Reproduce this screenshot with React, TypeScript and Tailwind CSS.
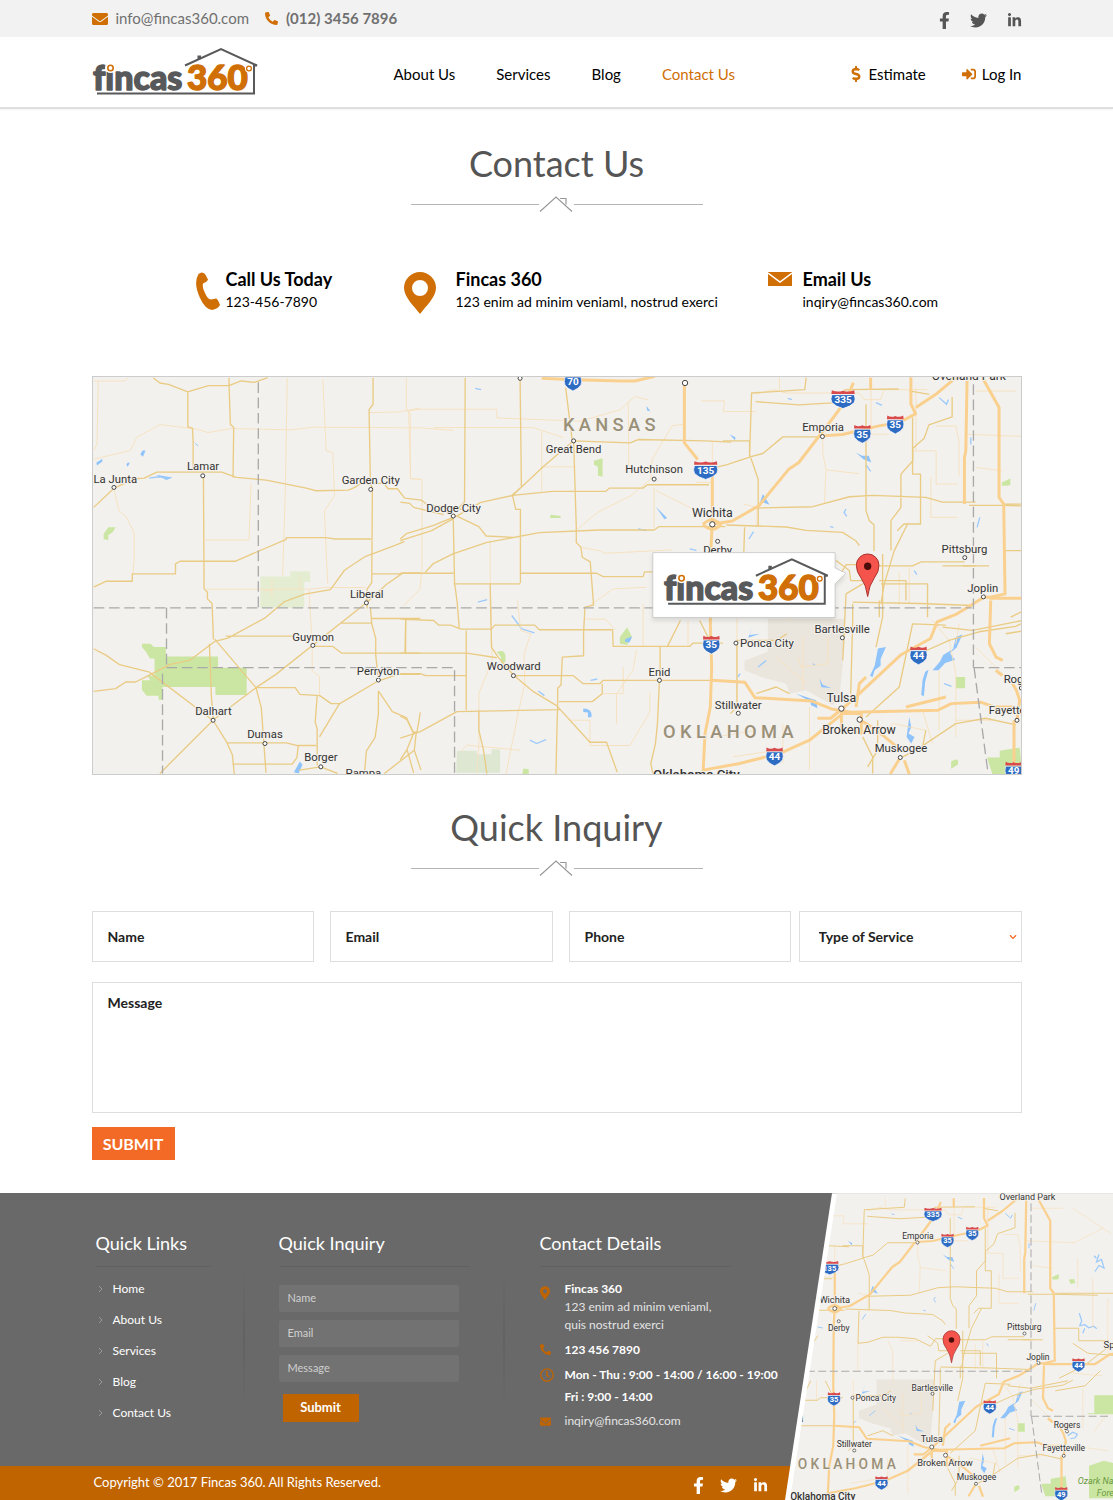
import type { ReactNode } from "react";
import {
    FaChevronDown,
    FaDollarSign,
    FaEnvelope,
    FaFacebookF,
    FaLinkedinIn,
    FaMapMarkerAlt,
    FaPhoneAlt,
    FaRegClock,
    FaSignInAlt,
    FaTwitter,
} from "react-icons/fa";

type LogoProps = { className?: string; x?: number; y?: number; width?: number; height?: number };

function Logo(props: LogoProps) {
    return (
        <svg viewBox="0 0 166 50" role="img" aria-label="fincas 360" {...props}>
            <path d="M93 18.500L129 2l36 16.500h-3v28H5" fill="none" stroke="#58595b" strokeWidth="2" />
            <path d="M105.500 13V8.500h3.500V12" fill="#58595b" />
            <g
                fontFamily="Lato, sans-serif"
                fontWeight="900"
                strokeWidth="1.400"
                strokeLinejoin="round"
                style={{ fontVariantLigatures: "none" }}
            >
                <text x="1" y="42.500" fontSize="34" fill="#58595b" stroke="#58595b">fincas</text>
                <text x="95" y="42.500" fontSize="35" fill="#d06f05" stroke="#d06f05">360</text>
            </g>
            <circle cx="18.500" cy="20.500" r="5.500" fill="#fff" />
            <circle cx="18.500" cy="21" r="2.700" fill="#fff" stroke="#d06f05" strokeWidth="1.600" />
            <circle cx="157" cy="21.500" r="4" fill="#fff" />
            <circle cx="157" cy="21.500" r="2.400" fill="#fff" stroke="#d06f05" strokeWidth="1.300" />
        </svg>
    );
}

// x, y = centre of the name, dx, dy = the town's dot
const towns: { name: string; x: number; y: number; dx: number; dy: number; big?: boolean }[] = [
    { name: "Lamar", x: 337, y: 287, dx: 336, dy: 315 },
    { name: "La Junta", x: 73, y: 325, dx: 69, dy: 350 },
    { name: "Garden City", x: 841, y: 328, dx: 841, dy: 356 },
    { name: "Liberal", x: 829, y: 669, dx: 828, dy: 697 },
    { name: "Guymon", x: 668, y: 800, dx: 667, dy: 825 },
    { name: "Perryton", x: 863, y: 901, dx: 864, dy: 929 },
    { name: "Dalhart", x: 368, y: 1022, dx: 367, dy: 1050 },
    { name: "Dumas", x: 523, y: 1092, dx: 523, dy: 1120 },
    { name: "Borger", x: 691, y: 1162, dx: 691, dy: 1190 },
    { name: "Pampa", x: 819, y: 1208, dx: 819, dy: 1240 },
    { name: "Great Bend", x: 1451, y: 236, dx: 1451, dy: 210 },
    { name: "Hutchinson", x: 1693, y: 296, dx: 1693, dy: 325 },
    { name: "Dodge City", x: 1090, y: 411, dx: 1089, dy: 436 },
    { name: "Woodward", x: 1271, y: 888, dx: 1270, dy: 916 },
    { name: "Enid", x: 1709, y: 904, dx: 1709, dy: 930 },
    { name: "Wichita", x: 1868, y: 428, dx: 1868, dy: 461, big: true },
    { name: "Derby", x: 1884, y: 538, dx: 1884, dy: 512 },
    { name: "Emporia", x: 2201, y: 169, dx: 2199, dy: 197 },
    { name: "Pittsburg", x: 2626, y: 535, dx: 2627, dy: 561 },
    { name: "Joplin", x: 2681, y: 653, dx: 2683, dy: 679 },
    { name: "Bartlesville", x: 2258, y: 777, dx: 2259, dy: 802 },
    { name: "Ponca City", x: 2032, y: 819, dx: 1939, dy: 818 },
    { name: "Stillwater", x: 1946, y: 1003, dx: 1946, dy: 1029 },
    { name: "Tulsa", x: 2256, y: 984, dx: 2256, dy: 1015, big: true },
    { name: "Broken Arrow", x: 2309, y: 1080, dx: 2311, dy: 1048, big: true },
    { name: "Muskogee", x: 2435, y: 1134, dx: 2433, dy: 1162 },
    { name: "Rogers", x: 2797, y: 925, dx: 2797, dy: 953 },
    { name: "Fayetteville", x: 2784, y: 1020, dx: 2784, dy: 1050 },
];

const shields = [
    { n: "70", x: 1449, y: 30 },
    { n: "135", x: 1848, y: 296 },
    { n: "35", x: 1865, y: 821 },
    { n: "335", x: 2261, y: 83 },
    { n: "35", x: 2319, y: 187 },
    { n: "35", x: 2418, y: 159 },
    { n: "44", x: 2488, y: 853 },
    { n: "44", x: 2055, y: 1157 },
    { n: "44", x: 2843, y: 685 },
    { n: "49", x: 2774, y: 1200 },
];

function Shield({ n, x, y }: { n: string; x: number; y: number }) {
    const k = n.length > 2 ? 1.4 : 1;
    return (
        <g transform={`translate(${x} ${y})`}>
            <g transform={`scale(${k} 1)`}>
                <path d="M-24 -12H24Q28 2 24 12Q16 24 0 30Q-16 24 -24 12Q-28 2 -24 -12Z" fill="#2e6cc4" stroke="#fff" strokeWidth="2" />
                <path d="M-24 -25Q-12 -18 0 -24Q12 -18 24 -25L25 -14H-25Z" fill="#d84a4c" />
            </g>
            <text y="13" textAnchor="middle" fontSize="30" fontWeight="700" fill="#fff">{n}</text>
        </g>
    );
}

type RegionMapProps = { left: number; top: number; width: number; height: number; className?: string; children?: ReactNode };

function RegionMap({ left, top, width, height, className, children }: RegionMapProps) {
    const inView = (x: number) => x > left && x < left + width + 10;

    return (
        <svg
            viewBox={`${left} ${top} ${width} ${height}`}
            className={className}
            fontFamily="Roboto, sans-serif"
            preserveAspectRatio="xMidYMid slice"
        >
            <rect x="-100" y="-100" width="3400" height="1500" fill="#f3f1ed" />

            {/* parks and reserves */}
            <g fill="#cbe6a3">
                <path d="M153 820h26l10 10h36v28h157v34h86v82h-94v-24H215v38h-12v-12h-36l-14-18v-28h26l-10-14h22v-52h-14l-12-20-12-14z" />
                <path d="M38 490l14-20 22 0-8 14-14 10 0 14-14-2z" />
                <path d="M1512 270l26-8v56l-14-4v-26l-12-6zM1382 432l30 4v6h-32zM1590 800l22-30 14 28-14 26-22-4zM1220 845q22-10 26 10v20l-12 4-2-20zM1300 1195l16 2v16h-20z" />
                <path d="M2600 920h28v34h-28zM2738 335l26-12v20l-24 2zM2694 1162h38v-20l60-10 8 80h-90zM2586 1174q26-16 20 10l-20 12zM2885 1090l60-20 80 20v130h-140z" />
                <path d="M2880 880h26v-72h110v76h-136zM2735 343l20-12 4 14zM2805 345l20-2 6 16-20 4z" />
            </g>
            <path d="M509 618h90v-16h60v32h-18v78H509z" fill="#e4edd2" />
            <path d="M1100 1142h60v10h44v-14h26v70h-132z" fill="#dde7d2" />
            <path d="M2035 745h230v90l-15 145-20 25-80-45-50 10-10-30-75-20-50-20 0-30 70-26v-50z" fill="#eae5dd" />

            {/* lakes and rivers */}
            <g fill="#8fc3fb">
                <path d="M16 276l18-12 0 8-16 12zM148 250l8-12 8 2-8 18zM106 280l6-6 4 4-6 10zM195 312l50 8-18 8zM310 212l14 14-6-2zM610 1206l18-32 8 10-12 26z" />
                <path d="M1698 408l34 34-8 4zM1670 105l12 16-10-2zM1607 806l20-8-8 18-14-2zM1480 1015q30 2 24 26l-10 0 0-14-14-2z" />
                <path d="M1920 190l18 10-2 8zM2300 245l18 10 20 0 8 20-24-10zM2020 370l-8 22 28 10zM2366 834l24-4-16 36 0 20-18 14-6 20-8-4 14-30z" />
                <path d="M2012 790l-36 12 14-38-10 30zM2190 925l10 18 26 10-30-2zM2120 970l60 20 4 24-20-10 0-10zM2600 800l20-8-18 40-20 16 16 20-30 10-20 22-18 0 22-26 10-20 30-18z" />
                <path d="M2500 930l8-26 10-6-10 36-4 44-8-4zM2460 1040l6 30-8 20 18 10-10 20-14-20z" />
            </g>
            <g fill="none" stroke="#9ccafb" strokeWidth="5">
                <path d="M2846 480l10 30-8 20 20-4 16 12 20-6 12 10M2868 540l-8 20M2925 245l-10 30 20-10 10 34-20-10-16 24M2905 250l10 10M2800 970l20-14 18 8-8 14-20 4" />
            </g>
            <g fill="none" stroke="#9ccafb" strokeWidth="4">
                <path d="M175 322l30-4 30 4M1155 52l18 4M1163 695l28-8M1265 735l30 40 38 12M1320 1110l20 10 28-12M1345 962l18 14M1502 930l20-4M1645 475l25 5M1800 535l20 4" />
                <path d="M2095 82l12 4M2360 95l18 8M2550 80l22 20 6-14M2330 282l14 20M2270 415l-6 10 8 12M2222 468l10 2M1978 505l14-22M2170 880l8 6M2030 870l-24 20M1952 910l-8 10M2565 940l22 8M2475 600l8 12M2672 440l-8 30M2645 200v20" />
            </g>

            {/* local roads */}
            <g fill="none" stroke="#f6e2c2" strokeWidth="3">
                <path d="M8 30h94l8-10M22 30l-4 190-10 20M8 265l110-26 20-40 70-38 110 14 34 10 70-12 182 4 60-8 330 2 95 8M590 20l-6 350-8 245M697 25l10 215 20 5 5 130-30 45 5 130 5 90M835 125l90-2 65-12M948 20v98l12 8v196l30 4M68 350l16 70 20 16 26 50v80l-6 60M345 508h130l6-170M345 656h310l50-5h120M655 656l10 160v86l22 16v60M518 660h26M544 625v56M628 620v40" />
                <path d="M950 120l40-5 230 0v26l250 10 120-34 45-40 40 10M1030 170h300l90 30M955 120l6 204 34 2v270l-6 60-50 50M1200 510v100l6 260-40 100 0 160-6 80M1282 690l10 90 30 10-20 60 2 90-20 90-40 200M1355 180v180M1357 288h100M1615 90l2 200M1463 475l60-50 100-50 60-50 4-60 60-100 40-6v-120M1693 350v120M1700 360l120 60M1475 530l60 12 10 6 200-10M1500 705l70-50 100-5M1486 746h60l30 32M1660 700v130M1640 838l-10 60-50 74v88M1440 1050h60v76h120l60-100v-60M1540 970h60v-80M1795 750v80M1110 1145l20-20 160 15" />
                <path d="M1835 90h70l-4 32h100M2000 70l50-14 40 10h220l14 20h50l10-30h130M2070 20v36M2200 197l0 50 10 50-5 100M2210 297l100 12M2330 190h70M2345 20v170M2480 50v190M2540 165h60l10 50v100M2475 240h66v100h64M2525 320v120h80M2630 190l200 8M2660 60l120 0M2660 290l80 10M1868 335h-50M1868 210v120M1942 745v260M1960 590v120M2125 860l10 30 80-10v-80M2140 800v160M2060 860l90 80M2530 750l50 60 20 100v190M2610 760l-10 60M2660 830l90 90M2460 590v110M2430 605l0 100" />
                <path d="M1962 400l40 10v60M2080 590l20 40v120M2130 590h70M2160 1010v190M2080 1060v120M1880 1100l120-20M1930 1160l130-20M2370 1100l40-40 100 20M2500 1020l30 100M2550 900v180M2600 1050h110M2820 60l150 100M2820 200l120-60M2840 260v120M2900 340v200M2960 420v220M2820 720l120 10M2860 780v160M2900 960l60-80M2820 1010l140 20" />
            </g>

            {/* state roads */}
            <g fill="none" stroke="#e9cb84" strokeWidth="4" strokeLinejoin="round">
                <path d="M187 20l20 16 26 4 58 23 62-19h62l36-14 40 4 40-14M291 63v105l14 4 2 38v90M415 20v22l4 118 10 10-2 150M8 410l62-58 60-28 30-2 38-18h195l44 16 90 8 120 24 30 8 96-2 20-8 18-12h70l12 16h28l22 28 50 6 18 14 44 6 60 8M338 315l2 340 10 10 0 20 14 14 4 108M848 20v80l-12 16 4 220 6 20-2 280-14 20v58M8 650l38-18h78v-22h130v-30l14-8h165l154-66v-5h118l30 4h107" />
                <path d="M8 835l38 20 40 28 90 22M8 963l66-8 30-20 30 0 40-20 62-32 62-14 74-56 40-10 110-60 60-50 60-22 78-14 42-58 60-40 90-34 30-12M372 806l124 146 60-40 272-215 0-20M405 797h210M828 697l60-55 50-35h52M845 610h90M845 744h145M750 758h94M840 710l4 50 12 44v50l8 75M667 828h60l26 20h237M946 750l-2 100" />
                <path d="M176 906l190 144 130-98h118l14 20 60 4 34 24h26l115-68 60-20h67M356 820l6 160 6 70M367 1050l-160 160M367 1050l40 64 18 40 6 60M407 1118h180l34 8h56M496 952l16 60 14 196M425 1182h180l14-20 4-34M680 976l-6 80 6 20v110M687 1100l60-100M864 962v70l-10 70-26 40-6 70M864 962l42 62 42 18 20 44 12 0 10-60M978 1086l-6 54 20 60M972 1140l-90 70M625 1200l66-10 50 20" />
                <path d="M1125 20l-2 374-30 30M1290 24l4 325-30 26-92 20-70 40-74 30-80 24-18 16M1427 50l20 160M1451 210l8 260v46l14 14 4 30 24 14 10 130-26 6-4 76v70l-64 4-4 84-10 10v40l-6 250M1451 210l-90 76-94 88M1267 374l10 42h14v222M1267 374l120-12h160l12-10h100l14-10h185M1451 210l170 6 24-10 200 4 80 4M930 394l28 4 12 12 90 22M1089 440l4 196 8 60 6 76M1100 436l66 32 22 28 80 4M930 510l94-30 40-22 26-14M1004 606l24-26 60-30 100-34 160-30 180-8h165l14-10h200" />
                <path d="M930 608h160M1090 640h200M1290 608h230l20 10h120l4-14h100M930 746l100 4 16 14h36l30 12h92l10-12h120l14 14h220l2 50h230l10-10h90M1128 780v240M1200 640l4 190 20 30 46 54 60 50 70 42 100 110h50l32 90M930 848h200l90 14M946 748v100M930 910h60l16 6h120M1270 916h180l30 24h50l10-10h330M1537 940v30l-30 24h-100M930 1104l60-20 110-60 310-6M930 1038l20 10 20 40-20 50 20 70M950 1138l-20 30M1166 1020v60l14 60 10 70M1709 930l-6 130-6 60-14 60 6 30M1711 830v100M1732 830l40-80" />
                <path d="M1850 296l60-14 50-16 30-10 30-8 60-50h110M2150 20l-4 36-160 10-6 190M1900 210h80l0 40 26 76v140M1998 92l130 10 100-6 40-40 160-2M1910 463l180 6 60 10 110 6 40 26 10 14M2000 412l170-4 110-30 70-4 160 6 50 14h100M2330 100v320l10 30 14 12v80M2290 700l0 50-6 220M2405 540v-90l30-40 0-100 36-40 0-38 34-30 14-40 70-24v-60M2470 140v170h24v150h-50l-20 20M2360 830l20-90v-190M2455 460l-40 80-30 100-10 60M1965 470l-4 130 40-4 60-20 60 0 70 6 60 30 20-30 60 0" />
                <path d="M2240 570l14 10 26 20 4 30h50M2320 640l-50 30-10 200M2350 586h120l26-12h130M2375 640h140v100M2290 695l200 4 160 6M2370 630h80l0 60M2560 586h100M2490 850l90-40 90-26 110-16 40-20M2560 770l90 10 150-30M2330 1040l100-90 40-190 100 4M2365 1050l0 90-30 50M2480 1140l60-40 60-40 90-16 90 20M2440 1160l60-30 10-50M2370 740v-50M2320 1100l30 60v50M1800 570l-60 90M1830 750l30 60M1942 810v200l-20 20M1942 810h120l30-20M2000 970l60-20 40 20" />
                <path d="M2640 404h100l180 4M2748 400h250M2744 540h100v50h120M2620 586h80M2820 600l60 40 120 10M2765 740l100-50 130-100M2750 790l120-20 60-60M2460 60l60 10" />
            </g>

            {/* interstates */}
            <g fill="none" stroke="#fad08f" strokeWidth="9" strokeLinejoin="round">
                <path d="M1355 22l100 4 140 4 40 0 60-14M1784 36v180l40 50M1868 310v140l-4 80-2 240 4 120-4 120-16 80-6 120M1868 461l60-10 80-46 90-110 30-20 100-130 44-60 20-50M2199 195l60-4 110-26 60-10 50-26-14-30v-80M2480 110l60-40 60-50M2344 20v36M2634 20l-4 220-4 20v140M2680 20l50 90 0 270 14 20 4 270-44 10h-20l-80 50-60 24-20 50-90 50-150 140-60 50-40 0M2705 690l-4 130 20 40 20 10" />
                <path d="M1866 930l100 6 30 46 170 10 60 24 60 10 260-6 40-20 90-4 40 14h60M1840 1200l110-20 120-30 90-40 100-80M2310 1048l50 30 60 50M2300 1010l10-70 20-20M2433 1162l-30 50M2445 1170l16 44M2775 1050l0 150M2784 1050l8-60-10-30-14-24M2720 900l20 16M2700 683h210l60-40 100-6M1840 461q26-26 54 0q-26 30-54 0M2256 1020v50l60 20v-60h-60M2450 1010l120-30" />
            </g>

            {/* state lines */}
            <g fill="none" stroke="#a9a9a9" strokeWidth="4" strokeDasharray="32 14">
                <path d="M503 34v678M8 712h2640M227 712v178M227 892h866v318M215 910v300M2653 40v852M2653 892h320M2655 892l42 318" />
            </g>

            {towns.map((t) => (
                <circle key={t.name} cx={t.dx} cy={t.dy} r={t.big ? 8 : 6} fill="#fff" stroke="#444" strokeWidth="3" />
            ))}
            <circle cx="1290" cy="22" r="6" fill="#fff" stroke="#444" strokeWidth="3" />
            <circle cx="1786" cy="36" r="8" fill="#fff" stroke="#444" strokeWidth="3" />
            <g fill="#333" stroke="#f3f1ed" strokeWidth="6" paintOrder="stroke" textAnchor="middle">
                {towns.filter((t) => inView(t.x)).map((t) => (
                    <text key={t.name} x={t.x} y={t.y + 12} fontSize={t.big ? 37 : 34}>{t.name}</text>
                ))}
                <text x="2639" y="26" fontSize="36">Overland Park</text>
                <text x="1820" y="1226" fontSize="40" fontWeight="500">Oklahoma City</text>
                {inView(2943) && <text x="2943" y="617" textAnchor="start" fontSize="38">Springfield</text>}
            </g>
            {inView(2840) && (
                <g fill="#6a9a40" fontStyle="italic" fontSize="36">
                    <text x="2840" y="1163">Ozark National</text>
                    <text x="2916" y="1209">Forest</text>
                </g>
            )}
            <g fill="#9a9078" fontSize="55" fontWeight="500" stroke="#f3f1ed" strokeWidth="5" paintOrder="stroke" className="tracking-[13px]">
                {inView(1419) && <text x="1419" y="179">KANSAS</text>}
                <text x="1720" y="1104">OKLAHOMA</text>
            </g>
            {shields.filter((s) => inView(s.x)).map((s) => (
                <Shield key={`${s.n}-${s.x}`} {...s} />
            ))}

            {children}

            {/* office pin */}
            <path d="M2335 678q-4-34-20-56-14-18-14-38a34 34 0 0 1 68 0q0 20-14 38-16 22-20 56z" fill="#f4544c" stroke="#a8322c" strokeWidth="3" />
            <circle cx="2335" cy="587" r="11" fill="#4c0d0a" />
        </svg>
    );
}

function SectionTitle({ children }: { children: ReactNode }) {
    return (
        <div className="flex flex-col items-center">
            <h2 className="text-[36px] leading-[48px] text-[#555]">{children}</h2>
            <svg viewBox="0 0 292 18" className="mt-2 h-[18px] w-[292px]" fill="none" stroke="#999">
                <path d="M0 9.500h128M163 9.500h129" stroke="#b5b5b5" />
                <path d="M129 16.500L145 2l16 14.500M149 3.500h6v6" strokeWidth="1.200" />
            </svg>
        </div>
    );
}

function SocialLinks({ className }: { className: string }) {
    return (
        <div className={className}>
            <a href="#" aria-label="Facebook"><FaFacebookF className="h-[17px] w-[11px]" /></a>
            <a href="#" aria-label="Twitter"><FaTwitter size={17} /></a>
            <a href="#" aria-label="LinkedIn"><FaLinkedinIn size={15} /></a>
        </div>
    );
}

function Field({ id, label, type = "text", className = "" }: { id: string; label: string; type?: string; className?: string }) {
    return (
        <div className={`flex h-[51px] min-w-0 items-center gap-2 border border-[#dedede] px-[15px] ${className}`}>
            <label htmlFor={id}>{label}</label>
            <input id={id} type={type} className="h-full min-w-0 flex-1 outline-none" />
        </div>
    );
}

function FooterField({ id, label }: { id: string; label: string }) {
    return (
        <div className="flex h-[27px] w-[180px] items-center gap-2 rounded-xs bg-[#727272] px-[9px] text-[11px] text-[#d0d0d0]">
            <label htmlFor={id}>{label}</label>
            <input id={id} type="text" className="h-full min-w-0 flex-1 outline-none" />
        </div>
    );
}

function FooterTitle({ children }: { children: ReactNode }) {
    return <h3 className="border-b border-[#616161] pb-[9px] text-[18px] leading-[28px]">{children}</h3>;
}

const navLinks = ["About Us", "Services", "Blog", "Contact Us"];
const quickLinks = ["Home", "About Us", "Services", "Blog", "Contact Us"];

export default function App() {
    return (
        <div className="min-h-screen bg-white font-[Lato,sans-serif] text-black">
            <div className="bg-[#f2f2f2]">
                <div className="mx-auto flex h-[37px] max-w-[930px] items-center text-[15px] text-[#707070]">
                    <FaEnvelope className="h-4 w-4 text-[#d06f05]" />
                    <a href="mailto:info@fincas360.com" className="ml-2">info@fincas360.com</a>
                    <FaPhoneAlt className="ml-4 h-[13px] w-[13px] text-[#d06f05]" />
                    <a href="tel:01234567896" className="ml-2 font-bold">(012) 3456 7896</a>
                    <SocialLinks className="ml-auto flex items-center gap-5 pt-1 text-[#555]" />
                </div>
            </div>

            <header className="border-b-2 border-[#dedede] shadow-xs">
                <div className="mx-auto flex h-[70px] max-w-[930px] items-center text-[15px]">
                    <a href="#"><Logo className="h-[50px] w-[166px]" /></a>
                    <nav className="ml-[136px] flex gap-[41px] pt-1">
                        {navLinks.map((link) => (
                            <a key={link} href="#" className={link === "Contact Us" ? "text-[#d06f05]" : ""}>{link}</a>
                        ))}
                    </nav>
                    <div className="ml-auto flex gap-9 pt-1">
                        <a href="#" className="flex items-center gap-2">
                            <FaDollarSign className="h-4 w-[10px] text-[#d06f05]" />
                            Estimate
                        </a>
                        <a href="#" className="flex items-center gap-[6px]">
                            <FaSignInAlt size={14} className="text-[#d06f05]" />
                            Log In
                        </a>
                    </div>
                </div>
            </header>

            <main className="mx-auto max-w-[930px]">
                <div className="pt-[30px]">
                    <SectionTitle>Contact Us</SectionTitle>
                </div>

                <div className="mt-[54px] grid grid-cols-[208fr_364fr_254fr] pl-[104px] text-[14px]">
                    <div className="flex gap-[6px]">
                        <svg viewBox="0 0 24 38" className="mt-[5px] h-[38px] w-6" fill="#d06f05">
                            <path d="M2.500 2Q6-1 9 2L12 7.500Q11.500 9.500 7 11.500Q6 16 9 21Q11.500 27 15 27.500L20 26.500Q22 27 24 33Q22 37 16 38Q9 37 4 26Q-3 11 2.500 2z" />
                        </svg>
                        <div>
                            <h3 className="text-[18px] leading-[24px] font-bold">Call Us Today</h3>
                            <p>123-456-7890</p>
                        </div>
                    </div>
                    <div className="flex gap-5">
                        <svg viewBox="0 0 32 42" className="mt-[5px] h-[42px] w-8" fill="#d06f05">
                            <path fillRule="evenodd" d="M16 0a16 16 0 0 1 16 16C32 25 22 34 16 42C10 34 0 25 0 16A16 16 0 0 1 16 0zm0 8a8 8 0 1 0 0 16a8 8 0 0 0 0-16z" />
                        </svg>
                        <div>
                            <h3 className="text-[18px] leading-[24px] font-bold">Fincas 360</h3>
                            <p>123 enim ad minim veniaml, nostrud exerci</p>
                        </div>
                    </div>
                    <div className="flex gap-[11px]">
                        <svg viewBox="0 0 24 14" className="mt-[5px] h-[14px] w-6">
                            <path d="M0 0h24v14H0z" fill="#d06f05" />
                            <path d="M0 1l12 9L24 1" fill="none" stroke="#fff" strokeWidth="1.500" />
                        </svg>
                        <div>
                            <h3 className="text-[18px] leading-[24px] font-bold">Email Us</h3>
                            <p>inqiry@fincas360.com</p>
                        </div>
                    </div>
                </div>

                <div className="mt-[62px] border border-[#ccc]">
                    <RegionMap left={6} top={18} width={2790} height={1194} className="block h-auto w-full">
                        <path d="M1689 546h548v46l32 16-32 32v101h-548z" fill="#fff" stroke="#bbb" strokeWidth="2" className="drop-shadow-xl" />
                        <Logo x={1720} y={560} width={498} height={150} />
                    </RegionMap>
                </div>

                <div className="mt-7">
                    <SectionTitle>Quick Inquiry</SectionTitle>
                </div>

                <form className="mt-[34px] text-[14px] font-bold text-[#222]">
                    <div className="grid grid-cols-[238fr_239fr_230fr_223fr]">
                        <Field id="name" label="Name" className="mr-4" />
                        <Field id="email" label="Email" type="email" className="mr-4" />
                        <Field id="phone" label="Phone" type="tel" className="mr-2" />
                        <div className="relative h-[51px] min-w-0 border border-[#dedede]">
                            <select aria-label="Type of Service" className="h-full w-full appearance-none px-[19px] outline-none">
                                <option>Type of Service</option>
                            </select>
                            <FaChevronDown size={8} className="pointer-events-none absolute top-[21px] right-1 text-[#f26a26]" />
                        </div>
                    </div>
                    <div className="mt-5 flex h-[131px] flex-col border border-[#dedede] px-[15px] pt-[9px]">
                        <label htmlFor="message">Message</label>
                        <textarea id="message" className="min-h-0 flex-1 resize-none outline-none" />
                    </div>
                    <button type="button" className="mt-[14px] h-[33px] w-[83px] bg-[#f26a26] text-[16px] text-white">SUBMIT</button>
                </form>
            </main>

            <footer className="mt-[33px] grid text-white">
                <div className="col-start-1 row-start-1">
                    <div className="h-[273px] bg-[#696969] pt-9 text-[12px]">
                        <div className="mx-auto flex max-w-[930px] pl-1">
                            <div className="w-[115px]">
                                <FooterTitle>Quick Links</FooterTitle>
                                <ul className="mt-[6px]">
                                    {quickLinks.map((link) => (
                                        <li key={link} className="flex h-[31px] items-center gap-[10px]">
                                            <svg viewBox="0 0 5 8" className="ml-[2px] h-2 w-[5px]" fill="none" stroke="#999">
                                                <path d="M1 1l3 3-3 3" />
                                            </svg>
                                            <a href="#">{link}</a>
                                        </li>
                                    ))}
                                </ul>
                            </div>
                            <div className="mt-10 mr-[34px] ml-8 h-[140px] w-[2px] bg-linear-to-b from-transparent via-[#626262] to-transparent" />
                            <div className="w-[191px]">
                                <FooterTitle>Quick Inquiry</FooterTitle>
                                <form className="mt-[18px] flex flex-col gap-2">
                                    <FooterField id="footer-name" label="Name" />
                                    <FooterField id="footer-email" label="Email" />
                                    <FooterField id="footer-message" label="Message" />
                                    <button type="button" className="mt-1 ml-1 h-7 w-[76px] bg-[#c06400] text-[13px] font-bold">Submit</button>
                                </form>
                            </div>
                            <div className="mt-10 mr-[35px] ml-[33px] h-[140px] w-[2px] bg-linear-to-b from-transparent via-[#626262] to-transparent" />
                            <div>
                                <div className="w-[191px]">
                                    <FooterTitle>Contact Details</FooterTitle>
                                </div>
                                <div className="mt-[13px] grid grid-cols-[25px_auto] text-[#e4e4e4]">
                                    <FaMapMarkerAlt className="mt-[6px] h-[14px] w-[10px] text-[#c06400]" />
                                    <p className="leading-[18px]">
                                        <span className="font-bold text-white">Fincas 360</span> <br />
                                        123 enim ad minim veniaml, <br />
                                        quis nostrud exerci
                                    </p>
                                    <FaPhoneAlt className="mt-[10px] h-[11px] w-[11px] text-[#c06400]" />
                                    <p className="mt-[6px] leading-[20px] font-bold text-white">123 456 7890</p>
                                    <FaRegClock className="mt-[8px] h-[14px] w-[14px] text-[#c06400]" />
                                    <p className="mt-1 leading-[22px] font-bold text-white">
                                        Mon - Thu : 9:00 - 14:00 / 16:00 - 19:00 <br />
                                        Fri : 9:00 - 14:00
                                    </p>
                                    <FaEnvelope className="mt-[8px] h-[11px] w-[11px] text-[#c06400]" />
                                    <p className="mt-[3px] leading-[20px]">inqiry@fincas360.com</p>
                                </div>
                            </div>
                        </div>
                    </div>
                    <div className="bg-[#c06400]">
                        <div className="mx-auto flex h-[34px] max-w-[930px] items-center pl-[2px]">
                            <p className="text-[13px]">Copyright © 2017 Fincas 360. All Rights Reserved.</p>
                            <SocialLinks className="ml-[312px] flex items-center gap-4 pt-1" />
                        </div>
                    </div>
                </div>
                <div className="col-start-1 row-start-1 h-[307px] w-[328px] justify-self-end bg-white [clip-path:polygon(47px_0,100%_0,100%_100%,0_100%)]">
                    <RegionMap
                        left={1669}
                        top={-1}
                        width={1312}
                        height={1228}
                        className="block h-full w-full [clip-path:polygon(52px_0,100%_0,100%_100%,5px_100%)]"
                    />
                </div>
            </footer>
        </div>
    );
}
